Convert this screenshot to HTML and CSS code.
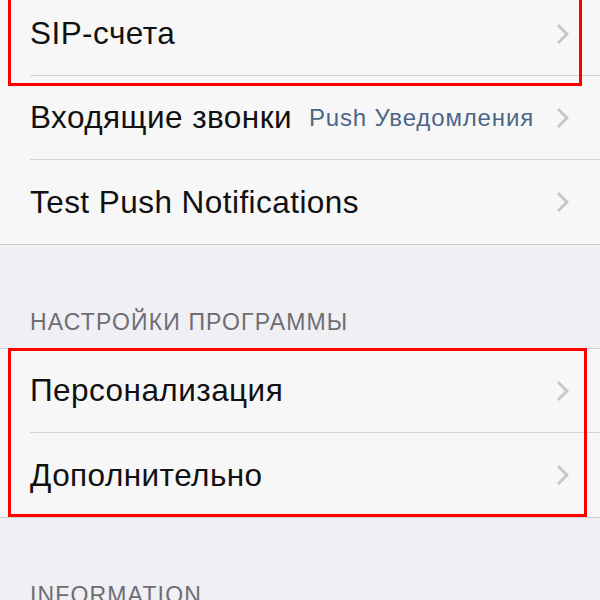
FILE: index.html
```html
<!DOCTYPE html>
<html lang="ru">
<head>
<meta charset="utf-8">
<link rel="stylesheet" href="styles.css">
</head>
<body>
<div class="page">
  <div class="group">
    <div class="row">
      <span class="title">SIP-счета</span>
      <svg class="chev" width="13" height="22" viewBox="0 0 13 22"><path d="M2 2 L11 11 L2 20" /></svg>
    </div>
    <div class="row">
      <span class="title">Входящие звонки</span>
      <span class="detail">Push Уведомления</span>
      <svg class="chev" width="13" height="22" viewBox="0 0 13 22"><path d="M2 2 L11 11 L2 20" /></svg>
    </div>
    <div class="row">
      <span class="title">Test Push Notifications</span>
      <svg class="chev" width="13" height="22" viewBox="0 0 13 22"><path d="M2 2 L11 11 L2 20" /></svg>
    </div>
  </div>

  <div class="header"><span>НАСТРОЙКИ ПРОГРАММЫ</span></div>

  <div class="group">
    <div class="row">
      <span class="title">Персонализация</span>
      <svg class="chev" width="13" height="22" viewBox="0 0 13 22"><path d="M2 2 L11 11 L2 20" /></svg>
    </div>
    <div class="row">
      <span class="title">Дополнительно</span>
      <svg class="chev" width="13" height="22" viewBox="0 0 13 22"><path d="M2 2 L11 11 L2 20" /></svg>
    </div>
  </div>

  <div class="header"><span>INFORMATION</span></div>

  <div class="mark mark-sip"></div>
  <div class="mark mark-app"></div>
</div>
</body>
</html>
```

FILE: styles.css
```css
html, body {
  margin: 0;
  padding: 0;
  background: #efeff4;
  overflow: hidden;
}

.page {
  position: relative;
  margin-top: -9px;
  font-family: "Liberation Sans", Arial, sans-serif;
}

.group {
  background: #f7f7f7;
  border-top: 1px solid #cfced3;
  border-bottom: 1px solid #cfced3;
}

.row {
  box-sizing: border-box;
  height: 84px;
  margin-left: 30px;
  padding-right: 31px;
  display: flex;
  align-items: center;
  border-bottom: 1px solid #d3d2d6;
}

.row:last-child {
  border-bottom: none;
}

.title {
  flex: 1;
  font-size: 31.5px;
  letter-spacing: 0.45px;
  color: #111;
  white-space: nowrap;
}

.detail {
  font-size: 24px;
  letter-spacing: 0.85px;
  color: #4a6689;
  margin-right: 22px;
  white-space: nowrap;
}

.chev {
  flex: none;
  display: block;
}

.chev path {
  fill: none;
  stroke: #c7c7cc;
  stroke-width: 3;
  stroke-linecap: butt;
  stroke-linejoin: miter;
}

.header {
  box-sizing: border-box;
  height: 103px;
  padding: 0 0 12px 30px;
  display: flex;
  align-items: flex-end;
  font-size: 23px;
  line-height: 28px;
  letter-spacing: 1.15px;
  color: #6d6d72;
}

.mark {
  position: absolute;
  border: 3px solid #ff0000;
  box-sizing: border-box;
  pointer-events: none;
}

.mark-sip {
  left: 8px;
  top: -10px;
  width: 574px;
  height: 105px;
}

.mark-app {
  left: 8px;
  top: 357px;
  width: 579px;
  height: 169px;
}
```
